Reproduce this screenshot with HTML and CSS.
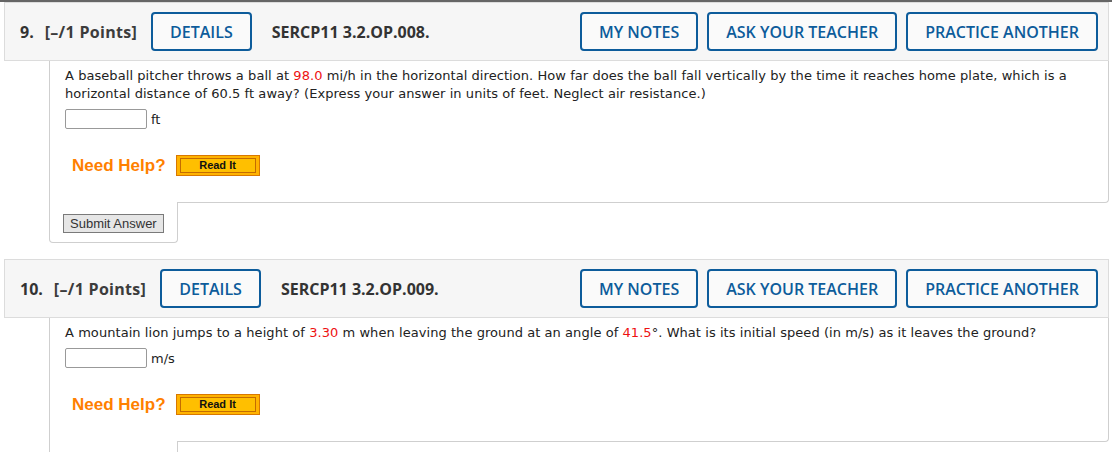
FILE: index.html
```html
<!DOCTYPE html>
<html lang="en">
<head>
<meta charset="utf-8">
<title>Questions</title>
<link rel="stylesheet" href="styles.css">
</head>
<body>
<div class="topline"></div>
<div class="page">
  <section class="question">
    <div class="qhead">
      <span class="qnum">9.</span>
      <span class="qpts">[&ndash;/1 Points]</span>
      <button class="btn">DETAILS</button>
      <span class="qid">SERCP11 3.2.OP.008.</span>
      <div class="actions">
        <button class="btn">MY NOTES</button>
        <button class="btn">ASK YOUR TEACHER</button>
        <button class="btn">PRACTICE ANOTHER</button>
      </div>
    </div>
    <div class="qbody">
      <div class="qcontent">
        <p class="qtext">A baseball pitcher throws a ball at <span class="red">98.0</span> mi/h in the horizontal direction. How far does the ball fall vertically by the time it reaches home plate, which is a horizontal distance of 60.5 ft away? (Express your answer in units of feet. Neglect air resistance.)</p>
        <div class="answer"><span class="ansbox"></span><span class="unit">ft</span></div>
        <div class="help"><span class="need">Need Help?</span><span class="readit"><span class="readit-in">Read It</span></span></div>
      </div>
      <div class="tab"><button class="submit">Submit Answer</button></div>
    </div>
  </section>

  <section class="question">
    <div class="qhead">
      <span class="qnum">10.</span>
      <span class="qpts">[&ndash;/1 Points]</span>
      <button class="btn">DETAILS</button>
      <span class="qid">SERCP11 3.2.OP.009.</span>
      <div class="actions">
        <button class="btn">MY NOTES</button>
        <button class="btn">ASK YOUR TEACHER</button>
        <button class="btn">PRACTICE ANOTHER</button>
      </div>
    </div>
    <div class="qbody">
      <div class="qcontent">
        <p class="qtext">A mountain lion jumps to a height of <span class="red">3.30</span> m when leaving the ground at an angle of <span class="red">41.5</span>&deg;. What is its initial speed (in m/s) as it leaves the ground?</p>
        <div class="answer"><span class="ansbox"></span><span class="unit">m/s</span></div>
        <div class="help"><span class="need">Need Help?</span><span class="readit"><span class="readit-in">Read It</span></span></div>
      </div>
      <div class="tab"><button class="submit">Submit Answer</button></div>
    </div>
  </section>
</div>
</body>
</html>
```
FILE: styles.css
```css
html, body {
  margin: 0;
  padding: 0;
  background: #fff;
}
body {
  font-family: "DejaVu Sans", Verdana, sans-serif;
  color: #222;
}
.topline {
  height: 2px;
  background: #666;
}
.page {
  padding: 0 3px 0 4px;
}
.question {
  margin-bottom: 16px;
}
.qhead {
  display: flex;
  align-items: center;
  height: 39px;
  padding: 9px 10px 9px 15px;
  background: #f6f6f6;
  border: 1px solid #dcdcdc;
  font-family: "Open Sans", sans-serif;
  font-size: 16px;
  font-weight: 700;
  color: #333;
}
.qnum {
  margin-right: 11px;
}
.qpts {
  margin-right: 14px;
  letter-spacing: 0.3px;
  color: #3c3c3c;
}
.btn {
  height: 39px;
  padding: 0 17px;
  border: 2px solid #0d5c9b;
  border-radius: 4px;
  background: #fafafa;
  color: #0d5c9b;
  font-family: "Open Sans", sans-serif;
  font-size: 16px;
  font-weight: 600;
  cursor: pointer;
}
.qid {
  margin-left: 20px;
}
.actions {
  margin-left: auto;
  display: flex;
  gap: 9px;
}
.qbody {
  margin-left: 45px;
}
.qcontent {
  padding: 6px 15px 26px 15px;
  border: 1px solid #cfcfcf;
  border-top: none;
  border-bottom-right-radius: 4px;
}
.qtext {
  margin: 0;
  font-size: 13px;
  line-height: 18px;
  letter-spacing: 0.06px;
  color: #222;
}
.red {
  color: #ee1111;
}
.answer {
  display: flex;
  align-items: center;
  margin-top: 6px;
  font-size: 13px;
}
.ansbox {
  width: 80px;
  height: 18px;
  border: 1px solid #999;
  border-radius: 2px;
  background: #fff;
}
.unit {
  margin-left: 4px;
}
.help {
  display: flex;
  align-items: center;
  margin-top: 26px;
  padding-left: 7px;
  gap: 10px;
}
.need {
  font-family: "Liberation Sans", Arial, sans-serif;
  font-size: 17px;
  font-weight: 700;
  color: #ff8000;
}
.readit {
  display: block;
  width: 82px;
  height: 19px;
  border: 1px solid #d97800;
  background: #ffb300;
}
.readit-in {
  display: block;
  height: 15px;
  margin: 2px 3px;
  border: 1px solid #c46c00;
  box-sizing: border-box;
  background: #ffbf00;
  font-family: "Liberation Sans", Arial, sans-serif;
  font-size: 11px;
  font-weight: 700;
  line-height: 13px;
  text-align: center;
  color: #111;
}
.tab {
  width: 114px;
  margin-top: -1px;
  padding: 12px 0 9px 13px;
  border: 1px solid #cfcfcf;
  border-top: none;
  border-bottom-left-radius: 4px;
  border-bottom-right-radius: 4px;
  background: #fff;
}
.submit {
  display: block;
  height: 19px;
  padding: 0 6px;
  border: 1px solid #7a7a7a;
  background: #e6e6e6;
  font-family: "Liberation Sans", Arial, sans-serif;
  font-size: 13px;
  color: #333;
}
```
